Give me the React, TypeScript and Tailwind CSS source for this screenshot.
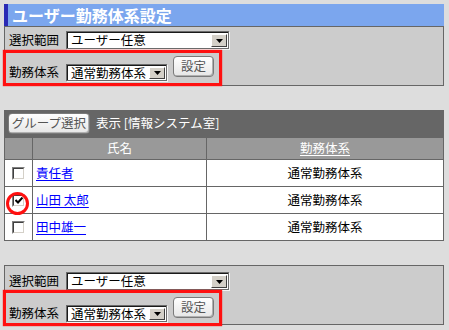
const font = "font-['Noto_Sans_CJK_JP','Noto_Sans_CJK_SC',sans-serif]";

function Arrow() {
  return (
    <span className="flex h-full w-[16px] items-center justify-center border-l border-t border-l-white border-t-white border-r border-b border-r-[#404040] border-b-[#404040] bg-[#d4d0c8]">
      <svg width="7" height="4" viewBox="0 0 7 4">
        <polygon points="0,0 7,0 3.5,4" fill="#000" />
      </svg>
    </span>
  );
}

function Select({ text, w, h }: { text: string; w: string; h: string }) {
  return (
    <div className={`flex ${w} ${h} border border-[#6b6b6b] bg-white shadow-[1px_1px_0_#f4f4f4]`}>
      <div className="flex flex-1 items-center border-l border-t border-[#1a1a1a] pl-[3px] leading-none text-black">
        {text}
      </div>
      <div className="border-t border-[#1a1a1a] p-px">
        <Arrow />
      </div>
    </div>
  );
}

function Btn({ label, w }: { label: string; w: string }) {
  return (
    <div
      className={`flex ${w} h-[21px] items-center justify-center rounded-[4px] border border-[#7a7a7a] bg-gradient-to-b from-white to-[#e6e6e6] shadow-[inset_-1px_-1px_0_#b0b0b0] leading-none text-[#555]`}
    >
      {label}
    </div>
  );
}

function Panel({ boxTop, pad }: { boxTop: string; pad: string }) {
  return (
    <div className={`relative h-[60px] w-[440px] border border-[#666] bg-[#cccccc] ${pad} pl-[4px]`}>
      <div className="flex items-center">
        <span className="w-[57px] leading-none text-black">選択範囲</span>
        <Select text="ユーザー任意" w="w-[163px]" h="h-[18px]" />
      </div>
      <div className="mt-[7px] flex items-start">
        <div className="mt-[8px] flex items-center">
          <span className="w-[57px] leading-none text-black">勤務体系</span>
          <Select text="通常勤務体系" w="w-[101px]" h="h-[17px]" />
        </div>
        <div className="ml-[6px]">
          <Btn label="設定" w="w-[41px]" />
        </div>
      </div>
      {/* 注記の赤枠 */}
      <div
        className={`pointer-events-none absolute ${boxTop} left-[-2px] h-[36px] w-[219px] border-[3px] border-[#ff1010] shadow-[0_0_1px_#ff0000]`}
      />
    </div>
  );
}

function Check({ checked }: { checked?: boolean }) {
  return (
    <div className="h-[13px] w-[13px] border border-t-[#808080] border-l-[#808080] border-r-white border-b-white">
      <div className="flex h-full w-full items-center justify-center border border-t-[#404040] border-l-[#404040] border-r-[#d4d0c8] border-b-[#d4d0c8] bg-white">
        {checked && (
          <svg width="8" height="7" viewBox="0 0 8 7">
            <polyline points="0.5,3 3,5.5 7.5,0.5" fill="none" stroke="#000" strokeWidth="2" />
          </svg>
        )}
      </div>
    </div>
  );
}

const rows = [
  { name: "責任者", kind: "通常勤務体系" },
  { name: "山田 太郎", kind: "通常勤務体系", checked: true },
  { name: "田中雄一", kind: "通常勤務体系" },
];

export default function App() {
  return (
    <div className={`h-[330px] w-[449px] overflow-hidden bg-[#dddddd] pl-[4px] pt-[4px] text-[12.5px] ${font}`}>
      {/* タイトル */}
      <div className="flex h-[22px] w-[440px] items-center border-l-[4px] border-[#2a2ab4] bg-[#7ba6ee] pl-[4px] text-[16px] font-bold leading-none text-white">
        ユーザー勤務体系設定
      </div>

      <Panel boxTop="top-[23px]" pad="pt-[4px]" />

      {/* 一覧 */}
      <div className="mt-[24px] w-[440px] border border-[#666]">
        <div className="flex h-[27px] items-start bg-[#666] pl-[3px] pt-[2px]">
          <Btn label="グループ選択" w="w-[82px]" />
          <span className="ml-[6px] mt-[4px] leading-none text-white">表示 [情報システム室]</span>
        </div>
        <div className="grid h-[21px] grid-cols-[27px_174px_237px] bg-[#999] text-white">
          <div />
          <div className="flex items-center justify-center border-l border-[#666]">氏名</div>
          <div className="flex items-center justify-center border-l border-[#666] underline underline-offset-2">勤務体系</div>
        </div>
        {rows.map((r) => (
          <div key={r.name} className="grid h-[27px] grid-cols-[27px_174px_237px] border-t border-[#666] bg-white">
            <div className="relative flex items-center justify-center">
              <Check checked={r.checked} />
              {r.checked && (
                <div className="pointer-events-none absolute left-[1px] top-[5px] z-10 h-[23px] w-[23px] rounded-full border-[3px] border-[#ff1010]" />
              )}
            </div>
            <div className="flex items-center border-l border-[#666] pl-[3px]">
              <a href="#" className="text-[#0000ff] underline underline-offset-2">
                {r.name}
              </a>
            </div>
            <div className="flex items-center justify-center border-l border-[#666] text-black">{r.kind}</div>
          </div>
        ))}
      </div>

      <div className="mt-[24px]">
        <Panel boxTop="top-[24px]" pad="pt-[6px]" />
      </div>
    </div>
  );
}
